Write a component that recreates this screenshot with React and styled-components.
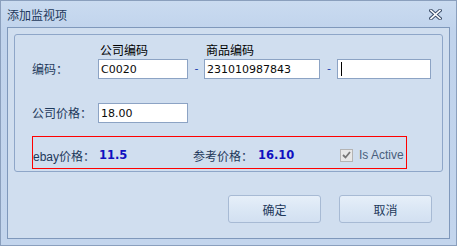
import React from "react";
import styled, { createGlobalStyle } from "styled-components";

const Global = createGlobalStyle`
  html, body { margin: 0; padding: 0; background: #c3d5ed; }
  * { box-sizing: border-box; }
`;

const Window = styled.div`
  width: 457px;
  height: 246px;
  border: 1px solid #8a9fbd;
  background: linear-gradient(#cadbf0, #c0d3ec 30px, #c3d5ed);
  display: flex;
  flex-direction: column;
  padding: 0 6px 6px 6px;
  font-family: "Noto Sans CJK SC", sans-serif;
`;

const TitleBar = styled.div`
  height: 26px;
  display: flex;
  align-items: center;
  justify-content: space-between;
  padding-right: 8px;
`;

const Title = styled.span`
  font-size: 12px;
  color: #1e395b;
  line-height: 16px;
  margin-top: 2px;
`;

const Panel = styled.div`
  flex: 1;
  border: 1px solid #7f98bb;
  background: #d0deef;
  padding: 6px;
  display: flex;
  flex-direction: column;
`;

const Group = styled.div`
  border: 1px solid #8ea6c8;
  border-radius: 3px;
  padding: 0 0 2px 17px;
  display: flex;
  flex-direction: column;
`;

const HeaderRow = styled.div`
  height: 24px;
  display: flex;
  align-items: flex-end;
  padding-left: 68px;
`;

const HeadLabel = styled.div`
  width: ${(p) => p.w};
  font-size: 12px;
  line-height: 16px;
  color: #000;
  margin-bottom: 1px;
`;

const Row = styled.div`
  display: flex;
  align-items: center;
  height: 20px;
  margin-top: ${(p) => p.mt || "0"};
`;

const Label = styled.div`
  width: 66px;
  font-size: 12px;
  line-height: 20px;
  color: #1e395b;
`;

const Input = styled.div`
  width: ${(p) => p.w};
  height: 20px;
  border: 1px solid #8ca3c4;
  background: #fff;
  font-family: "DejaVu Sans", sans-serif;
  font-size: 11px;
  color: #0a0a0a;
  padding-left: 2px;
  display: flex;
  align-items: center;
`;

const Caret = styled.span`
  width: 1px;
  height: 14px;
  background: #000;
  margin-left: 1px;
`;

const Dash = styled.div`
  width: ${(p) => p.w};
  font-family: "DejaVu Sans", sans-serif;
  font-size: 11px;
  color: #1a3fb0;
  text-align: center;
  line-height: 20px;
  padding-left: 1px;
`;

const RedBox = styled.div`
  margin-top: 13px;
  width: 375px;
  height: 33px;
  border: 1px solid #ff0000;
  display: flex;
  align-items: center;
  padding-top: 5px;
`;

const InfoLabel = styled.span`
  font-size: 12px;
  color: #1e395b;
  width: ${(p) => p.w};
  display: inline-flex;
  align-items: baseline;
`;

const Latin = styled.span`
  font-family: "Liberation Sans", sans-serif;
  font-size: 12px;
`;

const Value = styled.span`
  font-family: "DejaVu Sans", sans-serif;
  font-weight: bold;
  font-size: 11.5px;
  color: #1010c0;
  width: ${(p) => p.w};
`;

const CheckWrap = styled.span`
  display: flex;
  align-items: center;
  gap: 6px;
`;

const CheckBox = styled.span`
  width: 13px;
  height: 13px;
  border: 1px solid #b4b4b4;
  background: #e8e8e8;
  display: flex;
  align-items: center;
  justify-content: center;
`;

const CheckText = styled.span`
  font-family: "Liberation Sans", sans-serif;
  font-size: 12px;
  color: #4a5e7c;
`;

const Buttons = styled.div`
  display: flex;
  justify-content: flex-end;
  gap: 18px;
  margin-top: 23px;
  padding-right: 11px;
`;

const Button = styled.button`
  width: 93px;
  height: 28px;
  border: 1px solid #a7bad4;
  border-radius: 3px;
  background: linear-gradient(#e6eff9, #dbe7f5 50%, #d2e0f1);
  font-family: "Noto Sans CJK SC", sans-serif;
  font-size: 12px;
  color: #1e395b;
  padding: 0;
`;

const CloseIcon = () => (
  <svg width="13" height="11" viewBox="0 0 13 11">
    <path d="M2 1.5 L11 9.5 M11 1.5 L2 9.5" stroke="#3d4f6a" strokeWidth="3.6" strokeLinecap="square" />
    <path d="M2 1.5 L11 9.5 M11 1.5 L2 9.5" stroke="#ffffff" strokeWidth="1.6" strokeLinecap="square" />
  </svg>
);

export default function App() {
  return (
    <>
      <Global />
      <Window>
        <TitleBar>
          <Title>添加监视项</Title>
          <CloseIcon />
        </TitleBar>
        <Panel>
          <Group>
            <HeaderRow>
              <HeadLabel w="106px">公司编码</HeadLabel>
              <HeadLabel w="80px">商品编码</HeadLabel>
            </HeaderRow>
            <Row>
              <Label>编码：</Label>
              <Input w="90px">C0020</Input>
              <Dash w="16px">-</Dash>
              <Input w="116px">231010987843</Input>
              <Dash w="17px">-</Dash>
              <Input w="94px"><Caret /></Input>
            </Row>
            <Row mt="24px">
              <Label>公司价格：</Label>
              <Input w="90px">18.00</Input>
            </Row>
            <RedBox>
              <InfoLabel w="66px"><Latin>ebay</Latin>价格：</InfoLabel>
              <Value w="94px">11.5</Value>
              <InfoLabel w="65px">参考价格：</InfoLabel>
              <Value w="82px">16.10</Value>
              <CheckWrap>
                <CheckBox>
                  <svg width="9" height="8" viewBox="0 0 9 8">
                    <path d="M1 4 L3.5 6.5 L8 1" stroke="#777" strokeWidth="1.8" fill="none" />
                  </svg>
                </CheckBox>
                <CheckText>Is Active</CheckText>
              </CheckWrap>
            </RedBox>
          </Group>
          <Buttons>
            <Button>确定</Button>
            <Button>取消</Button>
          </Buttons>
        </Panel>
      </Window>
    </>
  );
}
